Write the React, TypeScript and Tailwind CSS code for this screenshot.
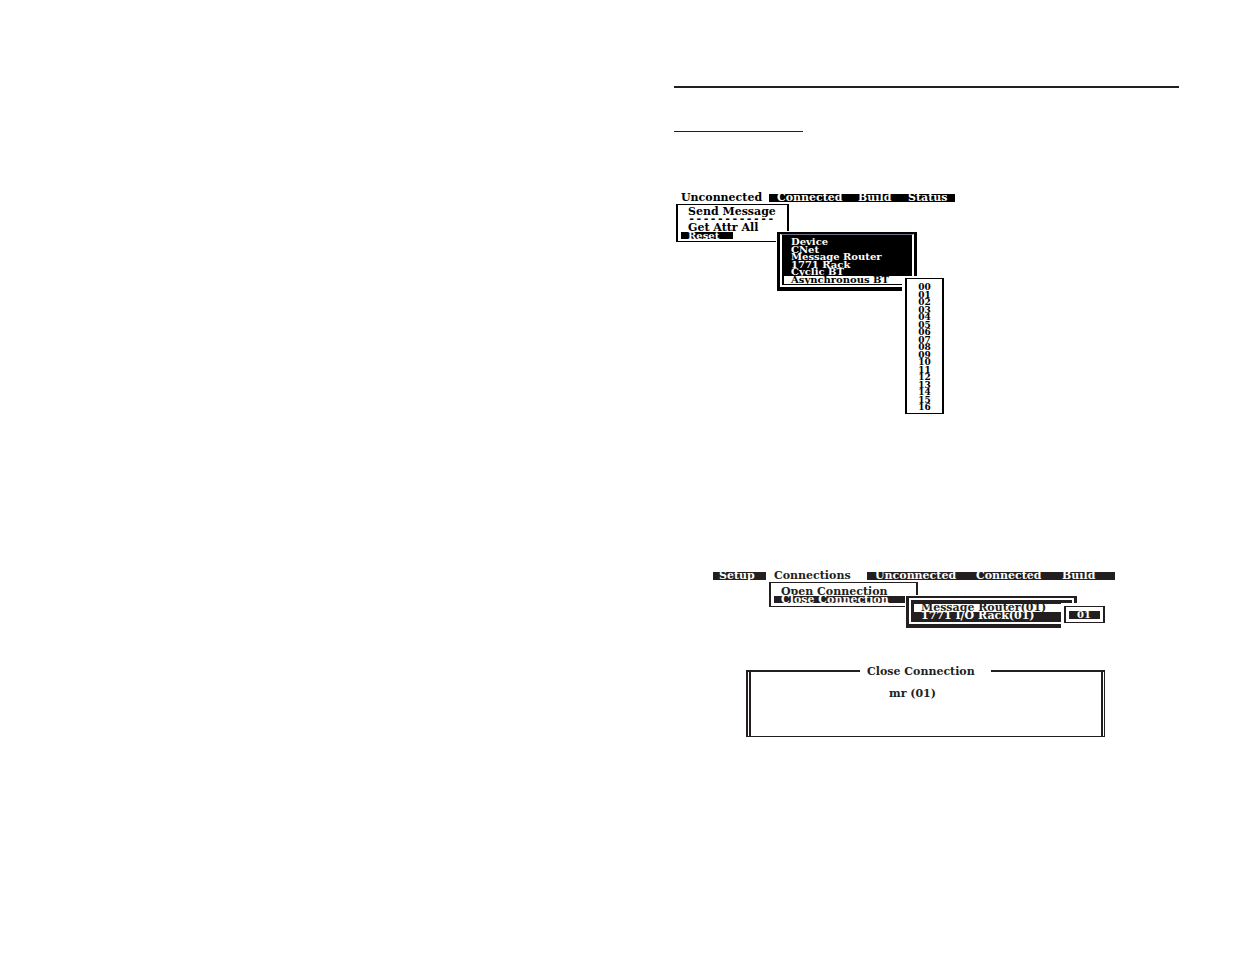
import type { ReactNode } from 'react'
import clsx from 'clsx'

const ATTRIBUTES = ['Device', 'CNet', 'Message Router', '1771 Rack', 'Cyclic BT', 'Asynchronous BT']
const SLOTS = Array.from({ length: 17 }, (_, i) => String(i).padStart(2, '0'))

interface ItemProps {
    children: ReactNode
    className?: string
}

function Item({ children, className }: ItemProps) {
    return (
        <button type="button" className={clsx('block shrink-0 whitespace-pre text-left leading-[6px]', className)}>
            {children}
        </button>
    )
}

/**
 * Unconnected > Reset > Asynchronous BT > slot
 */
function UnconnectedMenu() {
    return (
        <section className="min-h-[220px] text-black">
            <nav className="flex">
                <Item className="h-2 w-[95px] pl-[7px]">Unconnected</Item>
                <div className="flex w-[186px] bg-black text-white">
                    <Item className="h-2 w-[81px] pl-2">Connected</Item>
                    <Item className="h-2 w-[50px] pl-2">Build</Item>
                    <Item className="h-2 pl-2">Status</Item>
                </div>
            </nav>
            <div className="relative mt-0.5 ml-0.5 h-[38px] w-[113px] border-x-2 border-y border-black pt-[3px] pl-[3px]">
                <Item className="h-2 pl-[7px]">Send Message</Item>
                <div className="h-[7px] pl-[7px] font-['Liberation_Mono',monospace] text-[12px] leading-[8px]">------------</div>
                <Item className="h-[9px] pl-[7px]">Get Attr All</Item>
                <Item className="h-[7px] w-[52px] bg-black pl-[7px] text-[10px] text-white">Reset</Item>

                <div className="absolute top-[26px] left-[98px] w-[141px] bg-white pt-px pl-px text-[10px]">
                    <div className="bg-black px-[3px] pt-0.5 pb-1 text-white">
                        <div className="flex flex-col border-x-2 border-t border-b-2 border-white border-t-gray-500 pt-[3px] pb-px pl-0.5">
                            {ATTRIBUTES.map(name => (
                                <Item
                                    key={name}
                                    className={clsx(
                                        'pl-[7px]',
                                        name === 'Asynchronous BT' ? 'h-2 bg-white text-black' : 'odd:h-2 even:h-[7px]'
                                    )}
                                >
                                    {name}
                                </Item>
                            ))}
                        </div>
                    </div>

                    <div className="absolute top-[45px] left-[126px] w-[42px] bg-white pt-0.5 pl-[3px]">
                        <div className="flex flex-col items-center border-x-2 border-y border-black pt-1 pb-0.5 text-[9px] text-black">
                            {SLOTS.map(slot => (
                                <Item key={slot} className="odd:h-2 even:h-[7px]">{slot}</Item>
                            ))}
                        </div>
                    </div>
                </div>
            </div>
        </section>
    )
}

/**
 * Connections > Close Connection > 1771 I/O Rack
 */
function ConnectionsMenu() {
    return (
        <section className="pl-[39px]">
            <nav className="flex">
                <Item className="h-2 w-[53px] bg-[#231f20] pl-1.5 text-white">Setup</Item>
                <Item className="h-2 w-[101px] pl-2">Connections</Item>
                <div className="flex w-[248px] bg-[#231f20] text-white">
                    <Item className="h-2 w-[101px] pl-2">Unconnected</Item>
                    <Item className="h-2 w-[86px] pl-2">Connected</Item>
                    <Item className="h-2 pl-2">Build</Item>
                </div>
            </nav>
            <div className="relative mt-0.5 ml-14 h-[25px] w-[149px] border-x-2 border-y border-[#231f20] pt-[4px] pl-[3px]">
                <Item className="h-[9px] pl-[7px]">Open Connection</Item>
                <Item className="h-[7px] w-[132px] bg-[#231f20] pl-[7px] text-white">Close Connection</Item>

                <div className="absolute top-3 left-[134px] w-[172px] bg-white pt-px pl-px">
                    <div className="bg-[#231f20] px-[3px] pt-0.5 pb-1 text-white">
                        <div className="flex flex-col border-2 border-white pt-1 pb-0.5 pl-[3px]">
                            <Item className="h-2 bg-white pl-[7px] text-[#231f20]">Message Router(01)</Item>
                            <Item className="h-2 pl-[7px]">1771 I/O Rack(01)</Item>
                        </div>
                    </div>

                    <div className="absolute top-2 left-[156px] w-11 bg-white pt-[3px] pb-[5px] pl-[3px]">
                        <div className="flex flex-col border-x-2 border-y border-[#231f20] px-[3px] pt-1 pb-[3px]">
                            <Item className="h-2 bg-[#231f20] pl-2 text-[10px] text-white">01</Item>
                        </div>
                    </div>
                </div>
            </div>
        </section>
    )
}

function CloseConnectionDialog() {
    return (
        <section
            role="dialog"
            aria-label="Close Connection"
            className="ml-[72px] mt-[60px] w-[359px] text-[#231f20]"
        >
            <div className="flex h-2 items-center">
                <span className="h-0.5 w-[114px] bg-[#231f20]" />
                <h2 className="w-[131px] pl-[7px] leading-[7px] font-bold">Close Connection</h2>
                <span className="h-0.5 flex-1 bg-[#231f20]" />
            </div>
            <div className="-mt-[5px] flex h-[67px] border-x border-b border-l-2 border-[#231f20] px-px">
                <p className="flex-1 border-x-2 border-[#231f20] pt-5 pl-[138px] leading-[7px]">mr (01)</p>
            </div>
        </section>
    )
}

export default function App() {
    return (
        <main className="grid min-h-screen grid-cols-2 gap-px bg-white">
            <div />
            <article className="px-14 pt-[86px] font-['DejaVu_Serif',serif] text-[11px] font-bold text-[#231f20]">
                <div className="h-0.5 bg-[#231f20]" />
                <div className="mt-[43px] mb-[62px] h-px w-[129px] bg-[#231f20]" />
                <UnconnectedMenu />
                <div className="mt-[158px]">
                    <ConnectionsMenu />
                </div>
                <CloseConnectionDialog />
            </article>
        </main>
    )
}
